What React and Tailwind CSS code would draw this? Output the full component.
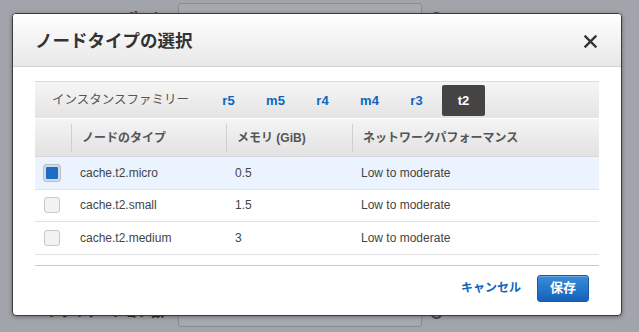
import React, { useState } from 'react';

const families = ['r5', 'm5', 'r4', 'm4', 'r3', 't2'];

const nodes = [
  { type: 'cache.t2.micro', memory: '0.5', network: 'Low to moderate' },
  { type: 'cache.t2.small', memory: '1.5', network: 'Low to moderate' },
  { type: 'cache.t2.medium', memory: '3', network: 'Low to moderate' },
];

const font = "font-['Liberation_Sans','Noto_Sans_CJK_JP',sans-serif]";

const HelpIcon = () => (
  <div className="ml-[8px] w-[13px] h-[13px] rounded-full border-2 border-[#45484d]" />
);

const FormRow = ({ label, className }) => (
  <div className={`flex items-center ${className}`}>
    <div className="w-[165px] pr-[1px] text-right text-[13px] font-bold text-[#2a2c30]">{label}</div>
    <div className="ml-[13px] w-[244px] h-[30px] rounded-[3px] border border-[#888b91] bg-[#a5a8ae]" />
    <HelpIcon />
  </div>
);

const Checkbox = ({ checked }) => (
  <div
    className={
      checked
        ? 'w-[16px] h-[16px] rounded-[3px] border-2 border-[#d6dbe2] bg-[#1b6dc6] shadow-[0_0_0_1px_#b7c0cc]'
        : 'w-[16px] h-[16px] rounded-[3px] border border-[#c9c9c9] bg-[#f2f2f2]'
    }
  />
);

export default function App() {
  const [family, setFamily] = useState('t2');
  const [selected, setSelected] = useState(0);

  return (
    <div className={`relative w-[639px] h-[332px] overflow-hidden bg-[#a1a4aa] ${font}`}>
      {/* page behind the dialog */}
      <div className="flex flex-col h-full">
        <FormRow label="ポート" className="mt-[3px]" />
        <FormRow label="レプリケーション数" className="mt-auto mb-[5px]" />
      </div>

      {/* dialog */}
      <div className="absolute left-[12px] top-[13px] w-[610px] h-[303px] flex flex-col bg-white border border-[#3b3b3b] rounded-[4px] overflow-hidden shadow-[0_1px_4px_rgba(0,0,0,0.35)]">
        <div className="h-[53px] flex items-center justify-between pl-[22px] pr-[24px] border-b border-[#d2d2d2] bg-linear-to-b from-white to-[#e8e8e8]">
          <h2 className="pt-[2px] text-[17.5px] font-bold text-[#333]">ノードタイプの選択</h2>
          <svg width="13" height="13" viewBox="0 0 13 13" className="mt-[2px]">
            <path d="M1.5 1.5 L11.5 11.5 M11.5 1.5 L1.5 11.5" stroke="#333" strokeWidth="2.4" strokeLinecap="square" />
          </svg>
        </div>

        <div className="px-[22px] pt-[14px]">
          <div className="h-[37px] flex items-center pl-[17px] border-t border-[#dcdcdc] bg-linear-to-b from-[#f6f6f6] to-[#e4e4e4]">
            <span className="w-[155px] text-[12.5px] text-[#555]">インスタンスファミリー</span>
            <div className="flex gap-[4px] mt-[1px]">
              {families.map((f) => (
                <button
                  key={f}
                  onClick={() => setFamily(f)}
                  className={
                    family === f
                      ? 'w-[43px] h-[31px] rounded-[2px] bg-[#444] text-white text-[13px] font-bold'
                      : 'w-[43px] h-[31px] text-[#1166bb] text-[13px] font-bold'
                  }
                >
                  {f}
                </button>
              ))}
            </div>
          </div>

          <div className="grid grid-cols-[36px_155px_126px_1fr] h-[39px] border-t border-white border-b border-b-[#d6d6d6] bg-linear-to-b from-[#f4f4f4] to-[#e2e2e2] text-[12px] font-bold text-[#555]">
            <div />
            {['ノードのタイプ', 'メモリ (GiB)', 'ネットワークパフォーマンス'].map((h) => (
              <div key={h} className="flex items-center">
                <div className="h-[28px] border-l border-[#cfcfcf]" />
                <span className="pl-[10px]">{h}</span>
              </div>
            ))}
          </div>

          {nodes.map((n, i) => (
            <div
              key={n.type}
              onClick={() => setSelected(i)}
              className={`grid grid-cols-[36px_155px_126px_1fr] items-center h-[32.5px] border-b border-[#e2e2e2] text-[12px] text-[#444] ${
                selected === i ? 'bg-[#eaf3fe]' : 'bg-white'
              }`}
            >
              <div className="pl-[9px]">
                <Checkbox checked={selected === i} />
              </div>
              <div className="pl-[9px]">{n.type}</div>
              <div className="pl-[9px]">{n.memory}</div>
              <div className="pl-[9px]">{n.network}</div>
            </div>
          ))}

          <div className="mt-[10px] border-t border-[#c9c9c9] flex items-center justify-end pr-[10px] pt-[9px]">
            <button className="text-[12px] font-bold text-[#1166bb] mr-[16px]">キャンセル</button>
            <button className="w-[52px] h-[27px] rounded-[3px] border border-[#1758a6] bg-linear-to-b from-[#3a8ddb] to-[#1462b9] text-white text-[13px] font-bold shadow-[inset_0_1px_0_rgba(255,255,255,0.25)]">
              保存
            </button>
          </div>
        </div>
      </div>
    </div>
  );
}
